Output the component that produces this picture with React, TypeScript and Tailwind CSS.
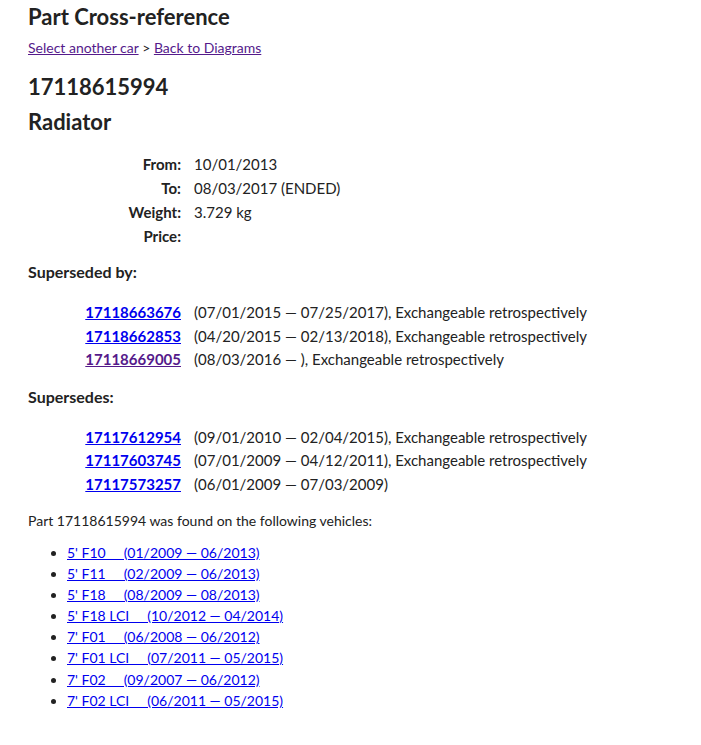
const superseded = [
  { no: "17118663676", text: "(07/01/2015 — 07/25/2017), Exchangeable retrospectively", visited: false },
  { no: "17118662853", text: "(04/20/2015 — 02/13/2018), Exchangeable retrospectively", visited: false },
  { no: "17118669005", text: "(08/03/2016 — ), Exchangeable retrospectively", visited: true },
];

const supersedes = [
  { no: "17117612954", text: "(09/01/2010 — 02/04/2015), Exchangeable retrospectively" },
  { no: "17117603745", text: "(07/01/2009 — 04/12/2011), Exchangeable retrospectively" },
  { no: "17117573257", text: "(06/01/2009 — 07/03/2009)" },
];

const vehicles = [
  ["5' F10", "(01/2009 — 06/2013)"],
  ["5' F11", "(02/2009 — 06/2013)"],
  ["5' F18", "(08/2009 — 08/2013)"],
  ["5' F18 LCI", "(10/2012 — 04/2014)"],
  ["7' F01", "(06/2008 — 06/2012)"],
  ["7' F01 LCI", "(07/2011 — 05/2015)"],
  ["7' F02", "(09/2007 — 06/2012)"],
  ["7' F02 LCI", "(06/2011 — 05/2015)"],
];

function PartRow({ no, text, visited }: { no: string; text: string; visited?: boolean }) {
  return (
    <>
      <a href="#" className={"text-right font-bold underline " + (visited ? "text-[#551a8b]" : "text-[#0000ee]")}>
        {no}
      </a>
      <span>{text}</span>
    </>
  );
}

export default function App() {
  return (
    <div className="min-h-screen bg-white px-[28px] pt-[3px] text-[#222] font-['Lato','Liberation_Sans',sans-serif]">
      <h1 className="text-[22px] font-bold leading-[28px]">Part Cross-reference</h1>
      <div className="mt-[8px] text-[14px] leading-[18px]">
        <a href="#" className="text-[#551a8b] underline">Select another car</a>
        {" > "}
        <a href="#" className="text-[#551a8b] underline">Back to Diagrams</a>
      </div>

      <h2 className="mt-[16px] text-[22px] font-bold leading-[28px]">17118615994</h2>
      <h2 className="mt-[7px] text-[22px] font-bold leading-[28px]">Radiator</h2>

      <div className="mt-[16px] grid grid-cols-[153px_auto] gap-x-[13px] text-[15px] leading-[24px]">
        <span className="text-right font-bold">From:</span>
        <span>10/01/2013</span>
        <span className="text-right font-bold">To:</span>
        <span>08/03/2017 (ENDED)</span>
        <span className="text-right font-bold">Weight:</span>
        <span>3.729 kg</span>
        <span className="text-right font-bold">Price:</span>
        <span></span>
      </div>

      <h3 className="mt-[12px] text-[16px] font-bold leading-[24px]">Superseded by:</h3>
      <div className="mt-[17px] grid grid-cols-[153px_auto] gap-x-[13px] text-[15px] leading-[23.5px]">
        {superseded.map((p) => (
          <PartRow key={p.no} {...p} />
        ))}
      </div>

      <h3 className="mt-[13px] text-[16px] font-bold leading-[24px]">Supersedes:</h3>
      <div className="mt-[17px] grid grid-cols-[153px_auto] gap-x-[13px] text-[15px] leading-[23.5px]">
        {supersedes.map((p) => (
          <PartRow key={p.no} {...p} />
        ))}
      </div>

      <p className="mt-[15px] text-[14px] leading-[20px]">Part 17118615994 was found on the following vehicles:</p>
      <ul className="mt-[11px] list-disc pl-[39px] text-[14px] leading-[21.1px]">
        {vehicles.map(([m, d]) => (
          <li key={m}>
            <a href="#" className="text-[#0000ee] underline whitespace-pre">
              {m + "\u00a0\u00a0\u00a0\u00a0\u00a0" + d}
            </a>
          </li>
        ))}
      </ul>
    </div>
  );
}
